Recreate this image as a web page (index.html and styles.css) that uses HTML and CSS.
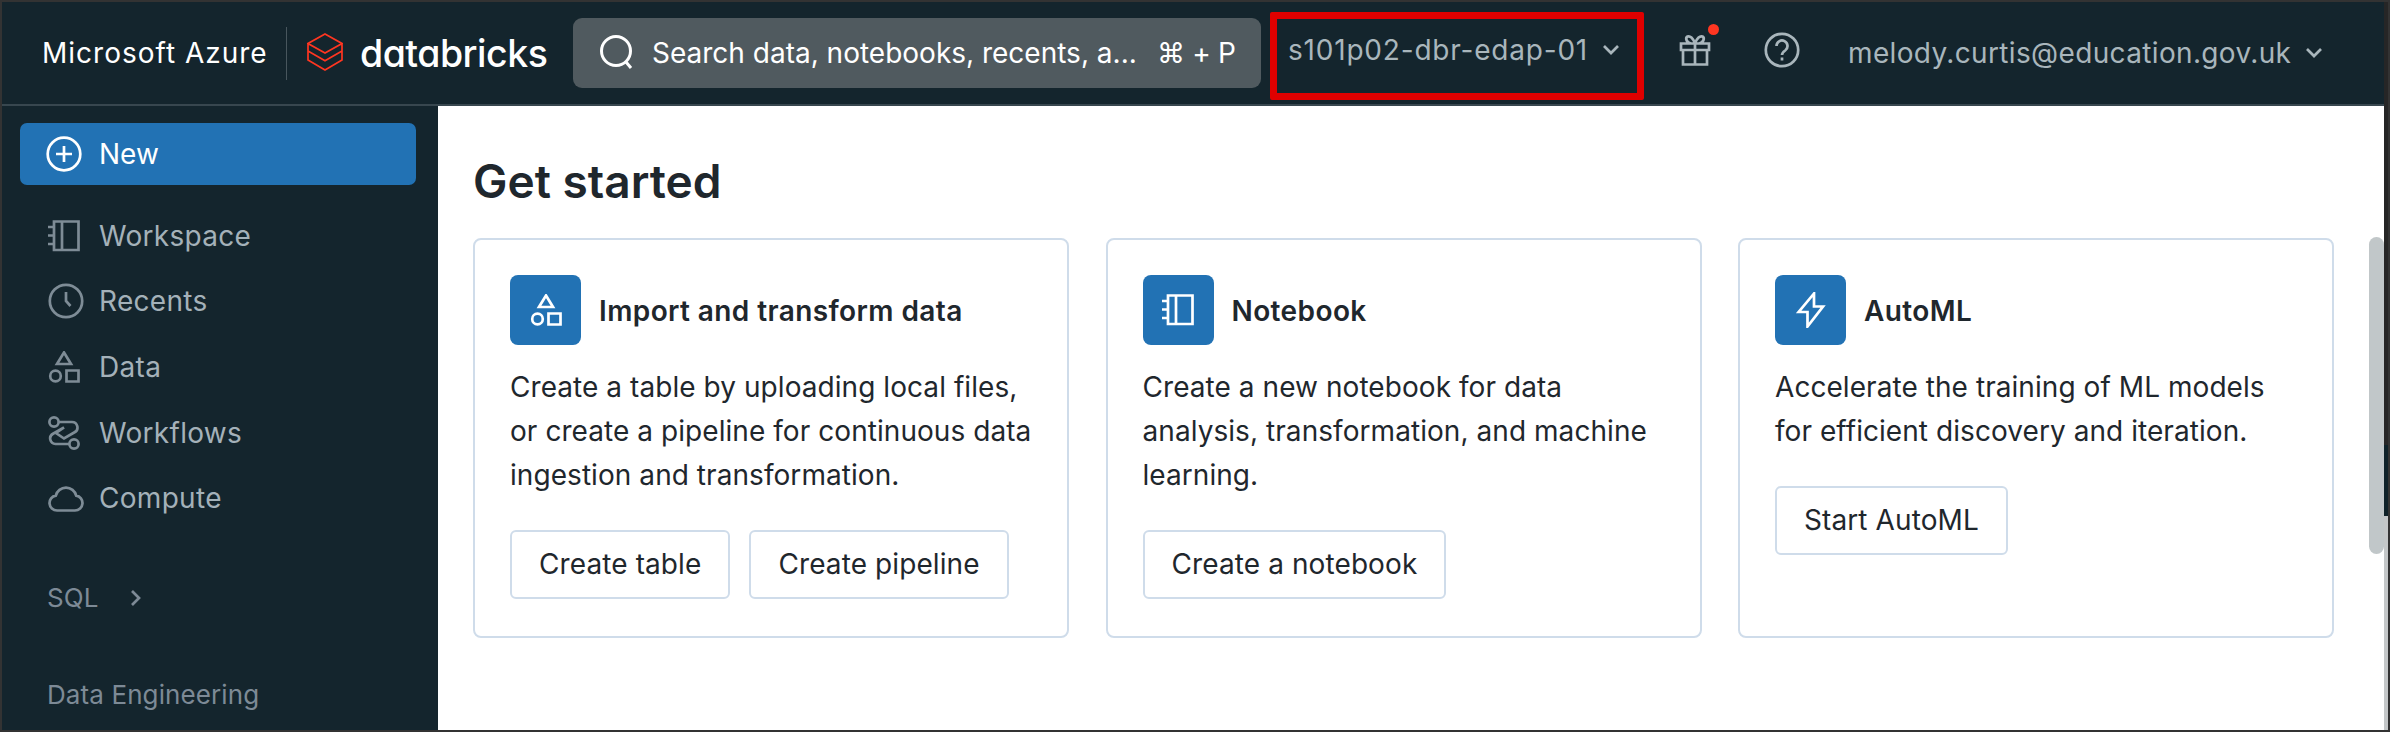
FILE: index.html

```html
<!DOCTYPE html>
<html lang="en">
<head>
    <meta charset="UTF-8">
    <title>Azure Databricks</title>
    <link rel="stylesheet" href="styles.css">
</head>
<body>
<svg class="defs" width="0" height="0">
    <symbol id="i-notebook" viewBox="0 0 32 32">
        <path d="M6 1.5h24.5v28.5H6zM14 1.5V30M0 7h6M0 15.5h6M0 24h6"/>
    </symbol>
    <symbol id="i-clock" viewBox="0 0 36 36">
        <circle cx="18" cy="18" r="16.2"/>
        <path d="M18 9v9l4.5 5"/>
    </symbol>
    <symbol id="i-shapes" viewBox="0 0 32 32">
        <path d="M16 1.5 23 13H9z"/>
        <circle cx="7.5" cy="25" r="5.3"/>
        <path d="M18.5 19.5H30.5V30.5H18.5z"/>
    </symbol>
    <symbol id="i-flows" viewBox="0 0 32 34">
        <circle cx="6" cy="6" r="4.6"/>
        <circle cx="26" cy="28" r="4.6"/>
        <path d="M10.6 6H24a5.5 5.5 0 0 1 2.6 10.3L16 22.5 8 17l8-5.5L5 17.7A5.5 5.5 0 0 0 7.5 28h13.9"/>
    </symbol>
    <symbol id="i-cloud" viewBox="0 0 36 28">
        <path d="M9 26.5h18a7.5 7.5 0 0 0 1.2-14.9A10.5 10.5 0 0 0 7.8 11.6 7.5 7.5 0 0 0 9 26.5z"/>
    </symbol>
    <symbol id="i-bolt" viewBox="0 0 36 36">
        <path d="M21 1.5 5.7 20H14.5V34.5L30 14.5H21z"/>
    </symbol>
</svg>

<div class="page">
    <div class="app">
        <header class="topbar">
            <span class="cloud-name">Microsoft Azure</span>
            <span class="divider"></span>
            <svg class="logo" width="36" height="38" viewBox="0 0 36 38">
                <path d="M18 1 35 10.5 18 20 1 10.5zM1 10.5V18L18 27.8 35 18V10.5M1 18V27L18 37 35 27V18"/>
            </svg>
            <span class="wordmark">databricks</span>
            <div class="search">
                <svg class="search-icon" width="36" height="36" viewBox="0 0 36 36">
                    <circle cx="17" cy="16" r="14.5"/>
                    <path d="M27 27l5 6"/>
                </svg>
                <span class="search-text">Search data, notebooks, recents, a...</span>
                <span class="search-key">⌘ + P</span>
            </div>
            <div class="workspace-pick">
                <span>s101p02-dbr-edap-01</span>
                <svg class="chevron" width="16" height="10" viewBox="0 0 16 10"><path d="M1 1l7 7 7-7"/></svg>
            </div>
            <span class="gift">
                <svg width="32" height="32" viewBox="0 0 32 32">
                    <path d="M2 9.5H30V16H2zM4 16V30.5H28V16M16 9.5V30.5M16 9.5C14 4 11 1.5 8.5 2.5 6 4 7.5 9 12 9.5M16 9.5C18 4 21 1.5 23.5 2.5 26 4 24.5 9 20 9.5"/>
                </svg>
                <i class="dot"></i>
            </span>
            <svg class="help" width="36" height="36" viewBox="0 0 36 36">
                <circle cx="18" cy="18" r="16.2"/>
                <path d="M12.5 14a5.5 5.5 0 1 1 8.7 4.5c-2.2 1.5-3.2 2.5-3.2 4.5M18 25.5v3"/>
            </svg>
            <div class="user">
                <span>melody.curtis@education.gov.uk</span>
                <svg class="chevron" width="16" height="10" viewBox="0 0 16 10"><path d="M1 1l7 7 7-7"/></svg>
            </div>
        </header>

        <div class="body-row">
            <nav class="sidebar">
                <a class="new-btn">
                    <svg width="36" height="36" viewBox="0 0 36 36">
                        <circle cx="18" cy="18" r="16.3"/>
                        <path d="M18 10v16M10 18h16"/>
                    </svg>
                    New
                </a>
                <ul class="nav-list">
                    <li><svg width="32" height="32"><use href="#i-notebook"/></svg>Workspace</li>
                    <li><svg width="36" height="36"><use href="#i-clock"/></svg>Recents</li>
                    <li><svg width="32" height="32"><use href="#i-shapes"/></svg>Data</li>
                    <li><svg width="32" height="34"><use href="#i-flows"/></svg>Workflows</li>
                    <li><svg width="36" height="28"><use href="#i-cloud"/></svg>Compute</li>
                </ul>
                <div class="nav-section nav-sql">
                    SQL
                    <svg width="12" height="18" viewBox="0 0 12 18"><path d="M2 2l7 7-7 7"/></svg>
                </div>
                <div class="nav-section nav-eng">Data Engineering</div>
            </nav>

            <main class="content">
                <h1>Get started</h1>
                <div class="cards">
                    <section class="card">
                        <div class="card-head">
                            <span class="tile"><svg width="32" height="32"><use href="#i-shapes"/></svg></span>
                            <h2>Import and transform data</h2>
                        </div>
                        <p>Create a table by uploading local files, or create a pipeline for continuous data ingestion and transformation.</p>
                        <div class="actions">
                            <button>Create table</button>
                            <button>Create pipeline</button>
                        </div>
                    </section>
                    <section class="card">
                        <div class="card-head">
                            <span class="tile"><svg width="32" height="32"><use href="#i-notebook"/></svg></span>
                            <h2>Notebook</h2>
                        </div>
                        <p>Create a new notebook for data analysis, transformation, and machine learning.</p>
                        <div class="actions">
                            <button>Create a notebook</button>
                        </div>
                    </section>
                    <section class="card">
                        <div class="card-head">
                            <span class="tile"><svg width="36" height="36"><use href="#i-bolt"/></svg></span>
                            <h2>AutoML</h2>
                        </div>
                        <p>Accelerate the training of ML models for efficient discovery and iteration.</p>
                        <div class="actions">
                            <button>Start AutoML</button>
                        </div>
                    </section>
                </div>
                <div class="scroll-thumb"></div>
            </main>
        </div>
    </div>

    <div class="edge">
        <div class="edge-dark"></div>
        <div class="edge-navy"></div>
        <div class="edge-light"></div>
    </div>
</div>
</body>
</html>
```

FILE: styles.css

```css
* {
    box-sizing: border-box;
    margin: 0;
    padding: 0;
}

html, body {
    width: 2390px;
    height: 732px;
    overflow: hidden;
}

body {
    background: #333;
    font-family: Inter, "Liberation Sans", sans-serif;
}

.defs {
    position: absolute;
}

svg {
    fill: none;
    stroke: currentColor;
    stroke-width: 2.7;
    flex: none;
}

.page {
    display: flex;
    height: 728px;
    margin-top: 2px;
    padding-left: 2px;
}

.app {
    width: 2382px;
    display: flex;
    flex-direction: column;
}

/* top bar */
.topbar {
    height: 104px;
    flex: none;
    background: #14252d;
    border-bottom: 2px solid #38474f;
    display: flex;
    align-items: center;
    padding-left: 40px;
    color: #a9b6bc;
    font-size: 28px;
}

.cloud-name {
    color: #fff;
    width: 224px;
    white-space: nowrap;
    letter-spacing: 1px;
}

.divider {
    width: 1px;
    height: 53px;
    background: #48565d;
    margin-left: 20px;
    margin-right: 20px;
}

.logo {
    color: #ff3621;
    stroke-width: 1.7;
    margin-bottom: 2px;
}

.wordmark {
    color: #fff;
    font-size: 37.5px;
    font-weight: 500;
    letter-spacing: -0.5px;
    font-feature-settings: "cv11";
    margin-left: 17px;
    width: 213px;
}

.search {
    width: 688px;
    height: 70px;
    background: #505a5f;
    border-radius: 9px;
    display: flex;
    align-items: center;
    padding-left: 26px;
    padding-bottom: 1px;
    color: #fff;
}

.search-icon {
    stroke-width: 3;
}

.search-text {
    margin-left: 17px;
    width: 505px;
    white-space: nowrap;
}

.search-key {
    white-space: nowrap;
    letter-spacing: -0.3px;
}

.workspace-pick {
    width: 374px;
    height: 88px;
    margin-left: 9px;
    margin-top: 6px;
    border: 7px solid #e00000;
    border-radius: 2px;
    display: flex;
    align-items: center;
    padding-left: 11px;
    padding-bottom: 12px;
    gap: 15px;
    white-space: nowrap;
    letter-spacing: 0.8px;
}

.gift {
    position: relative;
    margin-left: 35px;
    margin-bottom: 6px;
    display: flex;
}

.dot {
    position: absolute;
    right: -8px;
    top: -10px;
    width: 11px;
    height: 11px;
    border-radius: 50%;
    background: #ff3621;
}

.help {
    margin-left: 53px;
    margin-bottom: 6px;
}

.user {
    margin-left: 48px;
    display: flex;
    align-items: center;
    gap: 15px;
    white-space: nowrap;
    letter-spacing: 0.35px;
    padding-bottom: 1px;
}

/* sidebar */
.body-row {
    flex: 1;
    display: flex;
    min-height: 0;
}

.sidebar {
    width: 436px;
    background: #14252d;
    padding: 17px 22px 0 18px;
    font-size: 28px;
    color: #a4b1b9;
}

.new-btn {
    height: 62px;
    background: #2272b4;
    border-radius: 7px;
    display: flex;
    align-items: center;
    gap: 17px;
    padding-left: 26px;
    color: #fff;
}

.nav-list {
    list-style: none;
    margin-top: 18px;
}

.nav-list li {
    height: 65.6px;
    position: relative;
    display: flex;
    align-items: center;
    padding-left: 79px;
    letter-spacing: 0.3px;
}

.nav-list svg {
    position: absolute;
    left: 28px;
    color: #7e8c96;
}

.nav-section {
    color: #7d8a96;
    font-size: 26px;
    padding-left: 27px;
    display: flex;
    align-items: center;
    letter-spacing: 0.1px;
}

.nav-sql {
    margin-top: 48px;
    height: 38px;
    gap: 31px;
}

.nav-eng {
    margin-top: 59px;
    height: 38px;
}

/* main area */
.content {
    flex: 1;
    position: relative;
    background: #fff;
    padding: 44px 0 0 35px;
    color: #1f272d;
}

h1 {
    font-size: 46px;
    font-weight: 600;
    line-height: 62px;
    margin-bottom: 26px;
}

.cards {
    display: flex;
    gap: 36.5px;
}

.card {
    width: 596px;
    height: 400px;
    border: 2px solid #cfdcea;
    border-radius: 8px;
    padding: 35px 34px 0 35px;
}

.card-head {
    display: flex;
    align-items: center;
    gap: 18px;
}

.tile {
    width: 71px;
    height: 70px;
    background: #2272b4;
    border-radius: 8px;
    color: #fff;
    display: flex;
    align-items: center;
    justify-content: center;
}

h2 {
    font-size: 28px;
    font-weight: 600;
    letter-spacing: 0.4px;
    padding-top: 2px;
}

.card p {
    margin-top: 20px;
    font-size: 28px;
    line-height: 44px;
    height: 132px;
    letter-spacing: 0.06px;
}

.actions {
    display: flex;
    gap: 19px;
    margin-top: 33px;
}

.card:last-child .actions {
    margin-top: -11px;
}

button {
    height: 69px;
    padding: 0 27px 2px;
    background: #fff;
    border: 2px solid #cfdcea;
    border-radius: 6px;
    font: inherit;
    font-size: 28px;
    letter-spacing: 0.1px;
    color: #1f272d;
}

.scroll-thumb {
    position: absolute;
    right: 0;
    top: 131px;
    width: 15px;
    height: 317px;
    border-radius: 8px;
    background: #c1c7c9;
}

/* sliver of the next window */
.edge {
    width: 4px;
    display: flex;
    flex-direction: column;
}

.edge-dark {
    height: 443px;
    background: #262626;
}

.edge-navy {
    height: 71px;
    background: #0f2229;
}

.edge-light {
    flex: 1;
    background: #c4c7c8;
}
```
